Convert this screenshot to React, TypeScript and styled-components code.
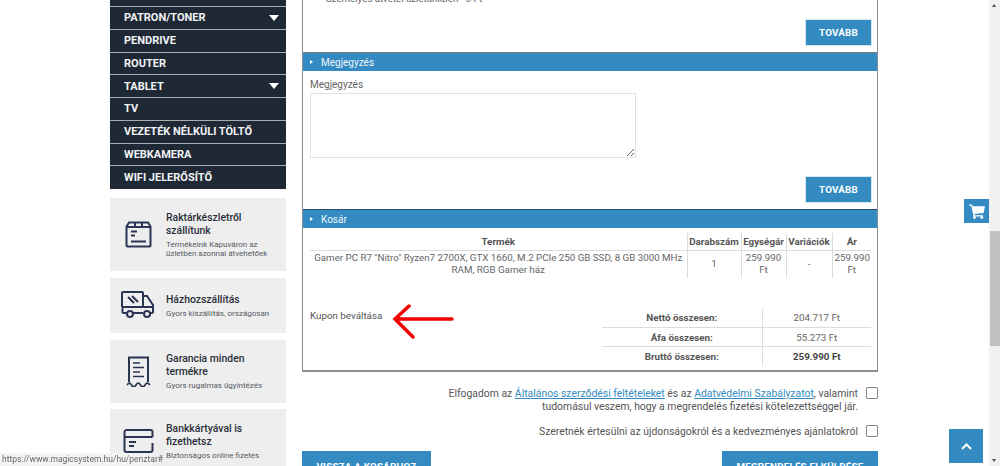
import styled, {createGlobalStyle} from "styled-components";

const GlobalStyle = createGlobalStyle`
    html, body {
        margin: 0;
        padding: 0;
        height: 466px;
        overflow: hidden;
        background: #fff;
    }
    * {
        box-sizing: border-box;
    }
`;

const menuItems = [
    {label: "", arrow: false},
    {label: "Patron/toner", arrow: true},
    {label: "Pendrive", arrow: false},
    {label: "Router", arrow: false},
    {label: "Tablet", arrow: true},
    {label: "TV", arrow: false},
    {label: "Vezeték nélküli töltő", arrow: false},
    {label: "Webkamera", arrow: false},
    {label: "Wifi jelerősítő", arrow: false},
];

const BoxIcon = () => (
    <svg width="27" height="27" viewBox="0 0 27 27" fill="none" stroke="#2b3553" strokeWidth="2">
        <path d="M4 1.500h19l2.500 4v19a1 1 0 0 1-1 1h-22a1 1 0 0 1-1-1v-19z"/>
        <path d="M1.500 6h24M10 1.500V6M17 1.500V6"/>
        <path d="M6 10.500h6M6 14.500h4M6 20.500h15" strokeWidth="1.800"/>
    </svg>
);

const TruckIcon = () => (
    <svg width="34" height="29" viewBox="0 0 34 29" fill="none" stroke="#2b3553" strokeWidth="2">
        <path d="M6 22H2.500a1 1 0 0 1-1-1v-4a1 1 0 0 1 1-1H22V2a1 1 0 0 0-1-1H2a1 1 0 0 0-1 1v14"/>
        <path d="M22 5h4l6 9v7a1 1 0 0 1-1 1h-2M22 22H12M22 16h10"/>
        <circle cx="9" cy="23" r="3"/>
        <circle cx="26" cy="23" r="3"/>
        <path d="M7 6l6 6M11 5l6 6"/>
    </svg>
);

const ReceiptIcon = () => (
    <svg width="25" height="31" viewBox="0 0 25 31" fill="none" stroke="#2b3553" strokeWidth="2">
        <path d="M3 26V1.500h19V26"/>
        <path d="M1 29c2-2.500 3-2.500 4.500 0s3 2.500 4.500 0 3-2.500 4.500 0 3 2.500 4.500 0 3-2.500 5 0" strokeWidth="1.600"/>
        <path d="M7 7h7M7 11.500h11M7 16h7M7 20.500h11" strokeWidth="1.600"/>
    </svg>
);

const CardIcon = () => (
    <svg width="31" height="24" viewBox="0 0 31 24" fill="none" stroke="#2b3553" strokeWidth="2">
        <path d="M1.500 8V3a2 2 0 0 1 2-2h24a2 2 0 0 1 2 2v5"/>
        <path d="M1.500 8h28"/>
        <path d="M1.500 8v13a2 2 0 0 0 2 2h24a2 2 0 0 0 2-2V14"/>
        <path d="M6 13h7M6 17h5" strokeWidth="1.800"/>
    </svg>
);

const CartIcon = () => (
    <svg width="16" height="15" viewBox="0 0 16 15" fill="#fff">
        <path d="M0 .5h3l.6 1.800H16l-1.400 6.700-9.300 1 .3 1.200H14v1.200H4.500L2.300 1.700H0z"/>
        <circle cx="5.500" cy="13.500" r="1.400"/>
        <circle cx="12.800" cy="13.500" r="1.400"/>
    </svg>
);

const App = () => {
    return (
        <>
            <GlobalStyle/>
            <Page>
                <Sidebar>
                    <Menu>
                        {menuItems.map((item, i) => (
                            <MenuItem key={i} $first={i === 0}>
                                {item.label}
                                {item.arrow && <MenuArrow/>}
                            </MenuItem>
                        ))}
                    </Menu>

                    <InfoCard $height={73}>
                        <InfoIcon><BoxIcon/></InfoIcon>
                        <InfoText>
                            <InfoTitle>Raktárkészletről szállítunk</InfoTitle>
                            <InfoDesc>Termékeink Kapuváron az üzletben azonnal átvehetőek</InfoDesc>
                        </InfoText>
                    </InfoCard>
                    <InfoCard $height={55}>
                        <InfoIcon><TruckIcon/></InfoIcon>
                        <InfoText>
                            <InfoTitle>Házhozszállítás</InfoTitle>
                            <InfoDesc>Gyors kiszállítás, országosan</InfoDesc>
                        </InfoText>
                    </InfoCard>
                    <InfoCard $height={63}>
                        <InfoIcon><ReceiptIcon/></InfoIcon>
                        <InfoText>
                            <InfoTitle>Garancia minden termékre</InfoTitle>
                            <InfoDesc>Gyors rugalmas ügyintézés</InfoDesc>
                        </InfoText>
                    </InfoCard>
                    <InfoCard $height={63}>
                        <InfoIcon><CardIcon/></InfoIcon>
                        <InfoText>
                            <InfoTitle>Bankkártyával is fizethetsz</InfoTitle>
                            <InfoDesc>Biztonságos online fizetés</InfoDesc>
                        </InfoText>
                    </InfoCard>
                </Sidebar>

                <Main>
                    <Panel>
                        <ClippedList>
                            <li>Személyes átvétel üzletünkben - 0 Ft</li>
                        </ClippedList>
                        <ButtonRow>
                            <BlueButton>Tovább</BlueButton>
                        </ButtonRow>

                        <SectionHeader>Megjegyzés</SectionHeader>
                        <NoteBody>
                            <NoteLabel>Megjegyzés</NoteLabel>
                            <NoteArea/>
                        </NoteBody>
                        <ButtonRow>
                            <BlueButton>Tovább</BlueButton>
                        </ButtonRow>

                        <SectionHeader $dark>Kosár</SectionHeader>
                        <CartBody>
                            <CartTable>
                                <colgroup>
                                    <col width="377"/>
                                    <col width="54"/>
                                    <col width="45"/>
                                    <col width="46"/>
                                    <col width="39"/>
                                </colgroup>
                                <thead>
                                    <tr>
                                        <CartHead>Termék</CartHead>
                                        <CartHead>Darabszám</CartHead>
                                        <CartHead>Egységár</CartHead>
                                        <CartHead>Variációk</CartHead>
                                        <CartHead>Ár</CartHead>
                                    </tr>
                                </thead>
                                <tbody>
                                    <tr>
                                        <CartCell>Gamer PC R7 "Nitro" Ryzen7 2700X, GTX 1660, M.2 PCIe 250 GB SSD, 8 GB 3000 MHz RAM, RGB Gamer ház</CartCell>
                                        <CartCell>1</CartCell>
                                        <CartCell>259.990 Ft</CartCell>
                                        <CartCell>-</CartCell>
                                        <CartCell>259.990 Ft</CartCell>
                                    </tr>
                                </tbody>
                            </CartTable>

                            <SummaryRow>
                                <CouponWrap>
                                    <Coupon>Kupon beváltása</Coupon>
                                    <ArrowMark width="62" height="36" viewBox="0 0 62 36" fill="none" stroke="#f00200" strokeWidth="3.500" strokeLinecap="round">
                                        <path d="M60 15H3M17 2L3 15l18 18"/>
                                    </ArrowMark>
                                </CouponWrap>
                                <TotalsTable>
                                    <tbody>
                                        <tr>
                                            <TotalLabel>Nettó összesen:</TotalLabel>
                                            <TotalValue>204.717 Ft</TotalValue>
                                        </tr>
                                        <tr>
                                            <TotalLabel>Áfa összesen:</TotalLabel>
                                            <TotalValue>55.273 Ft</TotalValue>
                                        </tr>
                                        <tr>
                                            <TotalLabel>Bruttó összesen:</TotalLabel>
                                            <TotalValue $strong>259.990 Ft</TotalValue>
                                        </tr>
                                    </tbody>
                                </TotalsTable>
                            </SummaryRow>
                        </CartBody>
                    </Panel>

                    <ConsentRow>
                        <ConsentText>
                            Elfogadom az <ConsentLink href="#">Általános szerződési feltételeket</ConsentLink> és az <ConsentLink href="#">Adatvédelmi Szabályzatot</ConsentLink>, valamint tudomásul veszem, hogy a megrendelés fizetési kötelezettséggel jár.
                        </ConsentText>
                        <CheckBox/>
                    </ConsentRow>
                    <ConsentRow $second>
                        <ConsentText>Szeretnék értesülni az újdonságokról és a kedvezményes ajánlatokról</ConsentText>
                        <CheckBox/>
                    </ConsentRow>

                    <BottomButtons>
                        <BottomButton $width={129}>Vissza a kosárhoz</BottomButton>
                        <BottomButton $width={156}>Megrendelés elküldése</BottomButton>
                    </BottomButtons>
                </Main>
            </Page>

            <CartFloat><CartIcon/></CartFloat>
            <TopFloat>
                <svg width="11" height="7" viewBox="0 0 11 7" fill="none" stroke="#fff" strokeWidth="2">
                    <path d="M1 6l4.500-4.500L10 6"/>
                </svg>
            </TopFloat>
            <Scrollbar>
                <ScrollArrow $up/>
                <ScrollThumb/>
                <ScrollArrow/>
            </Scrollbar>
            <StatusBar>https://www.magicsystem.hu/hu/penztar#</StatusBar>
        </>
    );
}

export default App;


const Page = styled.div`
    display: flex;
    align-items: flex-start;
    gap: 16px;
    height: 520px;
    margin-top: -17px;
    padding-left: 110px;
    font-family: Roboto, "Liberation Sans", sans-serif;
    color: #555;
`;

const Sidebar = styled.aside`
    width: 176px;
    flex-shrink: 0;
    display: flex;
    flex-direction: column;
    gap: 6.750px;
`;

const Menu = styled.nav`
    background: #1e2935;
    margin-bottom: 2.250px;
`;

const MenuItem = styled.div<{$first?: boolean}>`
    position: relative;
    display: flex;
    align-items: center;
    height: 22.750px;
    padding-left: 14px;
    border-bottom: 1px solid #a9adb1;
    font-size: 11px;
    font-weight: 700;
    color: #f2f3f4;
    text-transform: uppercase;
    ${props => props.$first && `height: 24px;`}
    &:last-child {
        border-bottom: 0;
    }
`;

const MenuArrow = styled.span`
    position: absolute;
    right: 7px;
    top: 8px;
    border-left: 5.500px solid transparent;
    border-right: 5.500px solid transparent;
    border-top: 6px solid #fff;
`;

const InfoCard = styled.div<{$height: number}>`
    display: flex;
    align-items: center;
    height: ${props => props.$height}px;
    background: #eeeeee;
`;

const InfoIcon = styled.div`
    width: 56px;
    flex-shrink: 0;
    display: flex;
    justify-content: center;
`;

const InfoText = styled.div`
    flex: 1;
    padding-right: 8px;
`;

const InfoTitle = styled.div`
    font-size: 10.400px;
    font-weight: 500;
    line-height: 13px;
    color: #2a2f3a;
    margin-bottom: 3px;
`;

const InfoDesc = styled.div`
    font-size: 8px;
    line-height: 9.500px;
    color: #555a63;
`;

const Main = styled.main`
    width: 576px;
    flex-shrink: 0;
`;

const Panel = styled.section`
    height: 389px;
    border: solid #8a8f93;
    border-width: 0 1px 2px;
`;

const ClippedList = styled.ul`
    margin: 0;
    padding: 9px 0 0 23px;
    height: 36px;
    font-size: 9.700px;
    line-height: 14px;
    color: #666;
    li::marker {
        color: #aaa;
    }
`;

const ButtonRow = styled.div`
    display: flex;
    justify-content: flex-end;
    padding: 0 5px 6px;
`;

const BlueButton = styled.button`
    width: 67px;
    height: 27px;
    border: 1px solid #d5e6f1;
    background: #338bc2;
    color: #fff;
    font-family: inherit;
    font-size: 9.800px;
    font-weight: 700;
    letter-spacing: .2px;
    text-transform: uppercase;
    padding: 0;
`;

const SectionHeader = styled.h3<{$dark?: boolean}>`
    display: flex;
    align-items: center;
    height: 19px;
    margin: 0;
    padding-left: 7px;
    background: #338bc2;
    border-top: 1px solid ${props => props.$dark ? "#2c4d63" : "#7a7d80"};
    font-size: 10px;
    font-weight: 400;
    color: #eef6fb;
    &::before {
        content: "";
        margin-right: 8px;
        border-left: 3px solid #fff;
        border-top: 2.500px solid transparent;
        border-bottom: 2.500px solid transparent;
    }
`;

const NoteBody = styled.div`
    padding: 6px 7px 0;
    height: 105px;
`;

const NoteLabel = styled.div`
    font-size: 10px;
    line-height: 15px;
    color: #666;
    margin-bottom: 1px;
`;

const NoteArea = styled.textarea`
    display: block;
    width: 326px;
    height: 65px;
    border: 1px solid #e2e2e2;
    background: #fff;
    margin: 0;
    padding: 0;
    outline: none;
`;

const CartBody = styled.div`
    padding: 5px 6px 0 7px;
`;

const CartTable = styled.table`
    width: 561px;
    table-layout: fixed;
    border-collapse: collapse;
    font-size: 9.750px;
`;

const CartHead = styled.th`
    height: 17px;
    padding: 0;
    font-size: 9.800px;
    font-weight: 700;
    color: #555;
    text-align: center;
    border-bottom: 1px solid #dcdcdc;
    border-left: 1px solid #dcdcdc;
    &:first-child {
        border-left: 0;
    }
`;

const CartCell = styled.td`
    padding: 1px 2px;
    line-height: 12.500px;
    color: #666;
    text-align: center;
    vertical-align: middle;
    border-left: 1px solid #dcdcdc;
    &:first-child {
        border-left: 0;
    }
`;

const SummaryRow = styled.div`
    display: flex;
    justify-content: space-between;
    margin-top: 31px;
`;

const CouponWrap = styled.div`
    position: relative;
`;

const Coupon = styled.div`
    font-size: 9.800px;
    line-height: 14px;
    color: #555;
`;

const ArrowMark = styled.svg`
    position: absolute;
    left: 82px;
    top: -5px;
`;

const TotalsTable = styled.table`
    width: 269px;
    table-layout: fixed;
    border-collapse: collapse;
    font-size: 9.800px;
`;

const TotalLabel = styled.td`
    width: 160px;
    height: 19px;
    padding: 0;
    text-align: center;
    font-weight: 700;
    color: #555;
    border-top: 1px solid #dcdcdc;
    border-right: 1px solid #dcdcdc;
    tr:first-child & {
        border-top: 0;
    }
`;

const TotalValue = styled.td<{$strong?: boolean}>`
    padding: 0;
    text-align: center;
    color: ${props => props.$strong ? "#444" : "#666"};
    font-weight: ${props => props.$strong ? 700 : 400};
    border-top: 1px solid #dcdcdc;
    tr:first-child & {
        border-top: 0;
    }
`;

const ConsentRow = styled.div<{$second?: boolean}>`
    display: flex;
    justify-content: flex-end;
    align-items: flex-start;
    gap: 8px;
    margin-top: ${props => props.$second ? "12px" : "15px"};
    padding-left: 130px;
`;

const ConsentText = styled.div`
    flex: 1;
    font-size: 10.400px;
    line-height: 13px;
    text-align: right;
    color: #555;
`;

const ConsentLink = styled.a`
    color: #338bc2;
    text-decoration: underline;
`;

const CheckBox = styled.span`
    width: 12px;
    height: 12px;
    flex-shrink: 0;
    border: 1px solid #8a8a8a;
    border-radius: 1px;
    background: #fff;
`;

const BottomButtons = styled.div`
    display: flex;
    justify-content: space-between;
    margin-top: 13px;
`;

const BottomButton = styled.button<{$width: number}>`
    width: ${props => props.$width}px;
    height: 30px;
    border: 0;
    background: #338bc2;
    color: #fff;
    font-family: inherit;
    font-size: 9.800px;
    font-weight: 700;
    letter-spacing: .2px;
    text-transform: uppercase;
    padding: 0;
`;

const CartFloat = styled.div`
    position: fixed;
    left: 964px;
    top: 199px;
    width: 25px;
    height: 24px;
    background: #338bc2;
    display: flex;
    align-items: center;
    justify-content: center;
`;

const TopFloat = styled.div`
    position: fixed;
    left: 949px;
    top: 429px;
    width: 34px;
    height: 34px;
    background: #338bc2;
    display: flex;
    align-items: center;
    justify-content: center;
`;

const Scrollbar = styled.div`
    position: fixed;
    right: 0;
    top: 0;
    bottom: 0;
    width: 11px;
    background: #f1f1f1;
`;

const ScrollThumb = styled.div`
    position: absolute;
    left: 1px;
    right: 0;
    top: 231px;
    height: 115px;
    background: #c1c1c1;
`;

const ScrollArrow = styled.span<{$up?: boolean}>`
    position: absolute;
    left: 3px;
    border-left: 2.500px solid transparent;
    border-right: 2.500px solid transparent;
    ${props => props.$up
        ? `top: 4px; border-bottom: 3px solid #505050;`
        : `bottom: 4px; border-top: 3px solid #505050;`}
`;

const StatusBar = styled.div`
    position: fixed;
    left: 0;
    bottom: 0;
    width: 152px;
    height: 13px;
    padding-left: 2px;
    background: #f4f4f4;
    border-top-right-radius: 2px;
    font-family: Roboto, "Liberation Sans", sans-serif;
    font-size: 8.500px;
    line-height: 13px;
    color: #666;
    white-space: nowrap;
`;
